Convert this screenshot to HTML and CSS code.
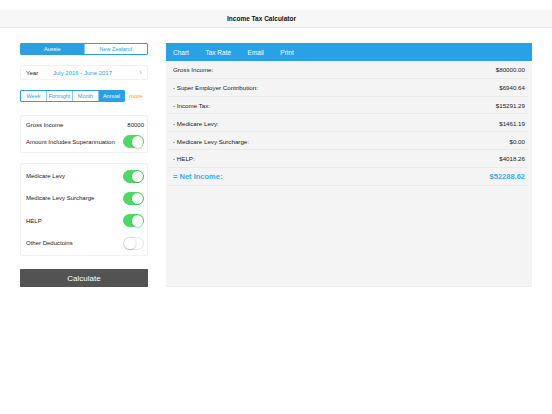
FILE: index.html
```html
<!DOCTYPE html>
<html>
<head>
<meta charset="utf-8">
<link rel="stylesheet" href="styles.css">
</head>
<body>
<div class="status"></div>
<header class="navbar">Income Tax Calculator</header>
<main class="content">
  <section class="left">
    <div class="seg country">
      <div class="seg-item active">Aussie</div>
      <div class="seg-item">New Zealand</div>
    </div>
    <div class="card year-row">
      <span class="label">Year</span>
      <span class="year-val">July 2016 - June 2017</span>
      <span class="chev">›</span>
    </div>
    <div class="period-row">
      <div class="seg period">
        <div class="seg-item">Week</div>
        <div class="seg-item">Fortnight</div>
        <div class="seg-item">Month</div>
        <div class="seg-item active">Annual</div>
      </div>
      <span class="more">more</span>
    </div>
    <div class="card card1">
      <div class="row"><span>Gross Income</span><span>80000</span></div>
      <div class="row"><span>Amount Includes Superannuation</span><span class="toggle on"></span></div>
    </div>
    <div class="card card2">
      <div class="row"><span>Medicare Levy</span><span class="toggle on"></span></div>
      <div class="row"><span>Medicare Levy Surcharge</span><span class="toggle on"></span></div>
      <div class="row"><span>HELP</span><span class="toggle on"></span></div>
      <div class="row"><span>Other Deductoins</span><span class="toggle"></span></div>
    </div>
    <button class="calc">Calculate</button>
  </section>
  <section class="right">
    <nav class="tabs">
      <span>Chart</span><span>Tax Rate</span><span>Email</span><span>Print</span>
    </nav>
    <div class="results">
      <div class="rrow"><span>Gross Income:</span><span>$80000.00</span></div>
      <div class="rrow"><span>- Super Employer Contribution:</span><span>$6940.64</span></div>
      <div class="rrow"><span>- Income Tax:</span><span>$15291.29</span></div>
      <div class="rrow"><span>- Medicare Levy:</span><span>$1461.19</span></div>
      <div class="rrow"><span>- Medicare Levy Surcharge:</span><span>$0.00</span></div>
      <div class="rrow"><span>- HELP:</span><span>$4018.26</span></div>
      <div class="rrow net"><span>= Net Income:</span><span>$52288.62</span></div>
    </div>
  </section>
</main>
</body>
</html>
```
FILE: styles.css
```css
* { box-sizing: border-box; }
html, body { margin: 0; padding: 0; background: #fff; }
body {
  width: 552px; height: 414px; overflow: hidden;
  font-family: "Liberation Sans", Arial, sans-serif;
  color: #222;
  font-size: 6px;
}
.status { height: 10px; }
.navbar {
  height: 18px;
  background: #f7f7f7;
  border-bottom: 1px solid #e6e6e6;
  display: flex; align-items: center; justify-content: center;
  padding-right: 29px;
  font-size: 6.5px; font-weight: bold; color: #111;
}
.content {
  display: flex;
  gap: 18px;
  padding: 15px 20px 0 20px;
}
.left { width: 128px; display: flex; flex-direction: column; }
.right { width: 366px; display: flex; flex-direction: column; }

.seg {
  display: flex;
  border: 0.6px solid #2a9fe3;
  border-radius: 1px;
  overflow: hidden;
}
.seg-item {
  flex: 1;
  display: flex; align-items: center; justify-content: center;
  color: #2a9fe3; background: #fff;
  font-size: 5.5px;
}
.seg-item + .seg-item { border-left: 0.6px solid #8fcaee; }
.seg-item.active { background: #2a9fe3; color: #fff; }
.country { height: 11.5px; }

.card {
  background: #fff;
  border: 0.6px solid #f2f2f2;
  border-radius: 2px;
}
.year-row {
  margin-top: 10.5px;
  height: 15px;
  display: flex; align-items: center;
  padding: 0 5px;
}
.year-row .label { width: 23px; color: #222; }
.year-val { flex: 1; color: #2a9fe3; padding-left: 4px; }
.chev { color: #b0b0b0; font-size: 8px; }

.period-row {
  margin-top: 10px;
  display: flex; align-items: center; gap: 4px;
}
.period { width: 105px; height: 11.5px; }
.more { color: #f29b1d; font-size: 6px; }

.card1 { margin-top: 13.5px; padding: 1px 3px 2px 5px; }
.card1 .row { height: 16.5px; }
.card2 { margin-top: 10px; padding: 1px 3px 1px 5px; }
.card2 .row { height: 22.3px; }
.row {
  display: flex; align-items: center; justify-content: space-between;
  color: #222;
}
.toggle {
  width: 21px; height: 13px; border-radius: 7px;
  background: #fff;
  border: 0.8px solid #e3e3e3;
  position: relative;
}
.toggle::after {
  content: "";
  position: absolute; top: 0; left: 0;
  width: 11.5px; height: 11.5px; border-radius: 50%;
  background: #fff;
  box-shadow: 0 0.5px 1.5px rgba(0,0,0,0.35);
}
.toggle.on { background: #4cd964; border-color: #4cd964; }
.toggle.on::after { left: auto; right: 0; }

.calc {
  margin-top: 13px;
  height: 18px;
  border: none; border-radius: 1px;
  background: #535353;
  color: #fff;
  font-family: "Liberation Sans", Arial, sans-serif;
  font-size: 8px;
  padding: 0;
}

.tabs {
  height: 18px;
  background: #28a1e6;
  display: flex; align-items: center;
  padding-left: 7px;
  gap: 16.5px;
  color: #fff;
  font-size: 6.5px;
}
.results {
  background: #f4f4f4;
  height: 226px;
  padding: 0 5px 0 1px;
  border-bottom: 0.6px solid #ededed;
}
.rrow {
  height: 17.8px;
  display: flex; align-items: center; justify-content: space-between;
  padding: 1px 2px 0 6px;
  border-bottom: 0.6px solid #eaeaea;
  color: #222;
  font-size: 6.2px;
}
.rrow.net { color: #3aa9ea; font-weight: bold; font-size: 7.5px; }
```
